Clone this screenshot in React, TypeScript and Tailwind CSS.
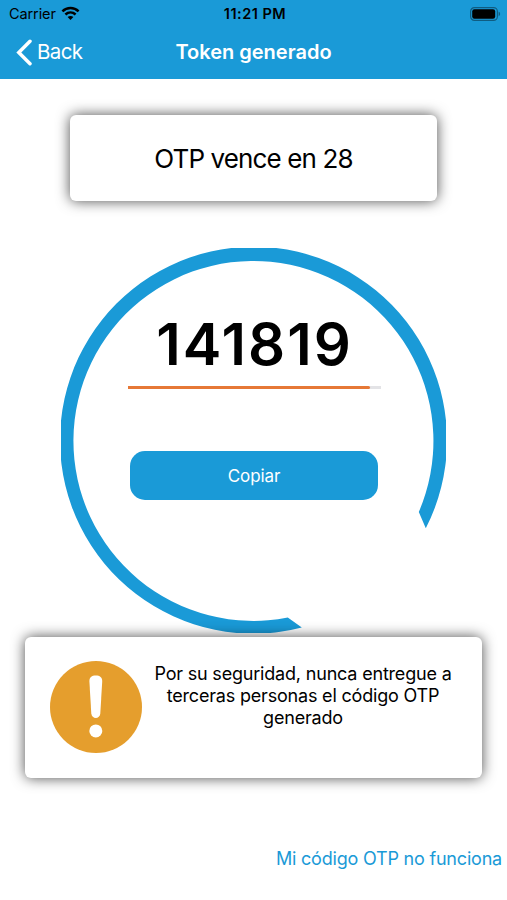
import type { ReactNode } from "react";

const WifiIcon = () => (
  <svg width="19" height="15" viewBox="0 0 19 15" fill="none" aria-hidden>
    <path d="M1.4 5.3C6 .9 13 .9 17.6 5.3" stroke="#000" strokeWidth="2.5" />
    <path d="M4.4 8.5c3-2.700 7.200-2.700 10.200 0" stroke="#000" strokeWidth="2.5" />
    <path d="M6.6 11c1.700-1.500 4.100-1.500 5.800 0L9.500 14z" fill="#000" />
  </svg>
);

const BatteryIcon = () => (
  <svg width="31" height="14" viewBox="0 0 31 14" fill="none" aria-hidden>
    <rect x="0.6" y="0.6" width="26.8" height="12.8" rx="3.8" stroke="#000" strokeOpacity="0.4" strokeWidth="1.2" />
    <rect x="2.2" y="2.2" width="23" height="9.6" rx="2.2" fill="#000" />
    <path d="M28.6 4.8c2 .6 2 3.8 0 4.4z" fill="#000" fillOpacity="0.4" />
  </svg>
);

const BackChevron = () => (
  <svg
    width="17"
    height="27"
    viewBox="0 0 17 27"
    fill="none"
    stroke="#fff"
    strokeWidth="3.5"
    strokeLinecap="round"
    aria-hidden
  >
    <path d="M14 2.3L2.8 13.5L14 24.7" />
  </svg>
);

const WarningIcon = () => (
  <svg width="92" height="92" viewBox="0 0 92 92" aria-hidden>
    <circle cx="46" cy="46" r="46" fill="#e59e2d" />
    <path
      d="M39.4 20.5C39.2 16.5 41.8 14.6 45.8 14.6C49.8 14.6 52.4 16.5 52.2 20.5L50.3 52.5C49.9 58.4 41.7 58.4 41.3 52.5Z"
      fill="#fff"
    />
    <circle cx="45.8" cy="69.9" r="6.5" fill="#fff" />
  </svg>
);

const Ring = () => (
  <svg width="385" height="385" viewBox="0 0 385 385" className="col-start-1 row-start-1 block" aria-hidden>
    <path
      d="M364.8 280.3A193.5 193.5 0 1 0 240.8 379.6L226.8 369.6A180 180 0 1 1 357.8 264Z"
      fill="#1a9ad7"
    />
  </svg>
);

const Card = ({ className, children }: { className: string; children: ReactNode }) => (
  <div className={`relative rounded-[6px] bg-white shadow-[0_0_14px_rgba(0,0,0,0.7)] ${className}`}>{children}</div>
);

const App = () => (
  <div className="flex h-[900px] w-[507px] flex-col overflow-hidden bg-white font-['Inter',sans-serif] text-black">
    <header className="h-[79px] bg-[#1a9ad7]">
      <div className="grid h-[27px] grid-cols-3 items-center pr-[6px] pl-[9px]">
        <div className="flex items-center gap-[5px] text-[14.5px] tracking-[-0.1px]">
          <span>Carrier</span>
          <WifiIcon />
        </div>
        <span className="text-center text-[14.5px] font-semibold tracking-[0.5px]">11:21 PM</span>
        <div className="flex justify-end">
          <BatteryIcon />
        </div>
      </div>
      <div className="grid h-[50px] grid-cols-[1fr_auto_1fr] items-center px-4 text-white">
        <button type="button" className="flex items-center gap-1 text-[20.5px] tracking-[-0.6px]">
          <BackChevron />
          <span className="pt-px">Back</span>
        </button>
        <h1 className="text-[20px] font-semibold">Token generado</h1>
      </div>
    </header>

    <main className="flex flex-col items-center">
      <Card className="mt-[36px] flex h-[86px] w-[367px] items-center justify-center text-[26px] tracking-[-0.88px]">
        <p>OTP vence en 28</p>
      </Card>

      <section className="mt-[47px] grid h-[385px] w-[385px] justify-items-center">
        <Ring />
        <div className="col-start-1 row-start-1 flex flex-col items-center">
          <p className="mt-[60px] pl-[2px] text-[58px] leading-[72px] font-semibold tracking-[2px]">141819</p>
          <div className="mt-[6px] ml-px h-[3px] w-[253px] bg-[#e3e3e6]">
            <div className="h-full w-[242px] rounded-r-full bg-[#e67836]" />
          </div>
          <button
            type="button"
            className="mt-[62px] ml-px h-[49px] w-[248px] rounded-[15px] bg-[#1a9ad7] pt-[2px] text-[17px] tracking-[-0.1px] text-white"
          >
            Copiar
          </button>
        </div>
      </section>

      <Card className="mt-1 flex h-[141px] w-[457px] pt-[24px] pl-[25px]">
        <WarningIcon />
        <p className="mt-[2px] ml-[6px] w-[310px] text-center text-[18px] leading-[22px] tracking-[-0.19px]">
          Por su seguridad, nunca entregue a
          <br />
          terceras personas el código OTP
          <br />
          generado
        </p>
      </Card>

      <a className="mt-[67px] mr-[5px] self-end text-[18px] tracking-[-0.2px] text-[#1a9ad7]">Mi código OTP no funciona</a>
    </main>
  </div>
);

export default App;
